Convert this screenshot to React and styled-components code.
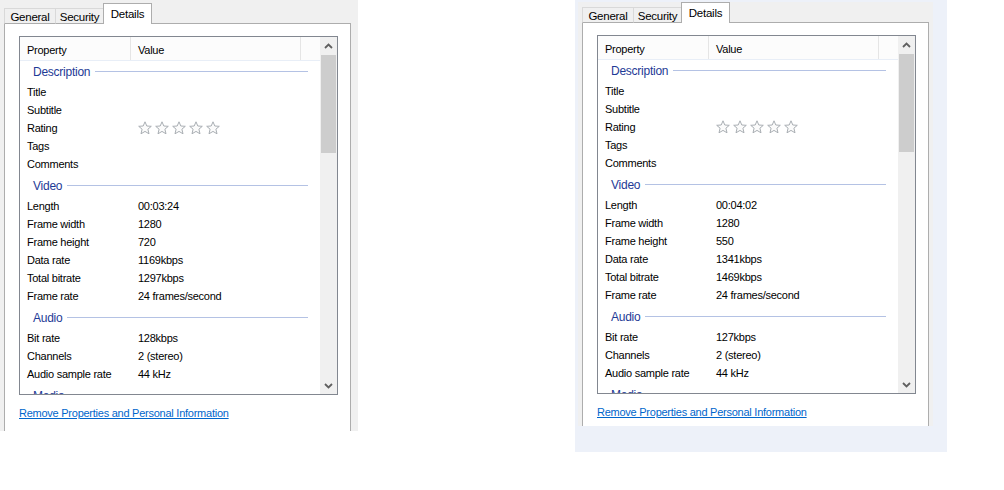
import styled, { createGlobalStyle } from "styled-components";

const GlobalStyle = createGlobalStyle`
  html, body { margin: 0; padding: 0; background: #ffffff; }
  body {
    font-family: "Liberation Sans", Arial, sans-serif;
    font-size: 11px;
    letter-spacing: -0.25px;
    color: #000;
  }
`;

const Stage = styled.div`
  display: flex;
  align-items: flex-start;
  width: 1004px;
  height: 490px;
  overflow: hidden;
`;

const Frame = styled.div`
  margin-left: ${(p) => p.$offset}px;
  width: ${(p) => p.$width}px;
  height: ${(p) => p.$height}px;
  padding: ${(p) => p.$pad};
  background: ${(p) => p.$bg};
  box-sizing: border-box;
`;

const Window = styled.div`
  width: ${(p) => p.$width}px;
  height: ${(p) => p.$height}px;
  padding: ${(p) => p.$top}px 0 0 4px;
  background: #f0f0f0;
  box-sizing: border-box;
  display: flex;
  flex-direction: column;
  overflow: hidden;
`;

const TabStrip = styled.div`
  display: flex;
  align-items: flex-end;
  height: 20px;
  margin-bottom: -1px;
  position: relative;
  z-index: 1;
`;

const Tab = styled.div`
  width: ${(p) => p.$w}px;
  height: ${(p) => (p.$active ? 21 : 16)}px;
  box-sizing: border-box;
  border: 1px solid ${(p) => (p.$active ? "#adadad" : "#d9d9d9")};
  border-bottom: ${(p) => (p.$active ? "none" : "1px solid #adadad")};
  background: ${(p) => (p.$active ? "#ffffff" : "#f0f0f0")};
  display: flex;
  justify-content: center;
  align-items: ${(p) => (p.$active ? "flex-start" : "center")};
  padding-top: ${(p) => (p.$active ? 4 : 1)}px;
  margin-left: ${(p) => (p.$first ? 0 : -1)}px;
  font-size: 11.5px;
`;

const Panel = styled.div`
  width: 347px;
  flex: 1;
  background: #ffffff;
  border: 1px solid #adadad;
  border-bottom: none;
  box-sizing: border-box;
  padding: 12px 0 0 14px;
  display: flex;
  flex-direction: column;
`;

const ListBox = styled.div`
  width: 319px;
  height: 359px;
  border: 1px solid #828790;
  box-sizing: border-box;
  display: flex;
`;

const ListContent = styled.div`
  width: 300px;
  overflow: hidden;
  display: flex;
  flex-direction: column;
`;

const HeaderRow = styled.div`
  height: 24px;
  flex-shrink: 0;
  display: flex;
  background: #fcfcfc;
  border-bottom: 1px solid #e8eef7;
  box-sizing: border-box;
`;

const HeaderCell = styled.div`
  width: ${(p) => p.$w}px;
  flex-shrink: 0;
  border-right: 1px solid #e5e5e5;
  box-sizing: border-box;
  padding: 2px 0 0 7px;
  display: flex;
  align-items: center;
`;

const GroupHeader = styled.div`
  height: 21px;
  flex-shrink: 0;
  margin-top: ${(p) => (p.$first ? 0 : 3)}px;
  padding: 1px 12px 0 13px;
  box-sizing: border-box;
  display: flex;
  align-items: center;
  color: #1e3a96;
  font-size: 12px;
`;

const GroupLine = styled.div`
  flex: 1;
  height: 1px;
  margin: 0 0 1px 5px;
  background: #b4c2e4;
`;

const Row = styled.div`
  height: 18px;
  flex-shrink: 0;
  padding-top: 2px;
  box-sizing: border-box;
  display: flex;
  align-items: center;
`;

const Label = styled.div`
  width: 111px;
  flex-shrink: 0;
  padding-left: 7px;
  box-sizing: border-box;
`;

const Value = styled.div`
  padding-left: 7px;
  display: flex;
  align-items: center;
  gap: 3px;
`;

const ScrollBar = styled.div`
  width: 17px;
  background: #f0f0f0;
  display: flex;
  flex-direction: column;
`;

const ArrowButton = styled.div`
  height: 17px;
  flex-shrink: 0;
  display: flex;
  align-items: center;
  justify-content: center;
`;

const Thumb = styled.div`
  height: 98px;
  margin: 1px 1px 0;
  background: #cdcdcd;
  flex-shrink: 0;
`;

const Track = styled.div`
  flex: 1;
`;

const RemoveLink = styled.a`
  margin-top: 11px;
  line-height: 14px;
  align-self: flex-start;
  color: #0066cc;
  text-decoration: underline;
  cursor: pointer;
`;

const Chevron = ({ down }) => (
  <svg width="9" height="6" viewBox="0 0 9 6">
    <polyline
      points={down ? "1,1 4.5,4.5 8,1" : "1,5 4.5,1.5 8,5"}
      fill="none"
      stroke="#606060"
      strokeWidth="1.8"
    />
  </svg>
);

const Star = () => (
  <svg width="14" height="14" viewBox="0 0 14 14">
    <polygon
      points="7,0.8 8.8,5 13.3,5.3 9.9,8.2 11,12.8 7,10.4 3,12.8 4.1,8.2 0.7,5.3 5.2,5"
      fill="#fbfbfb"
      stroke="#a9aeb3"
      strokeWidth="1"
      strokeLinejoin="round"
    />
  </svg>
);

const Rating = () => (
  <>
    {[0, 1, 2, 3, 4].map((i) => (
      <Star key={i} />
    ))}
  </>
);

const makeGroups = (v) => [
  {
    title: "Description",
    rows: [["Title"], ["Subtitle"], ["Rating", <Rating key="r" />], ["Tags"], ["Comments"]],
  },
  {
    title: "Video",
    rows: [
      ["Length", v.length],
      ["Frame width", "1280"],
      ["Frame height", v.height],
      ["Data rate", v.dataRate],
      ["Total bitrate", v.total],
      ["Frame rate", "24 frames/second"],
    ],
  },
  {
    title: "Audio",
    rows: [
      ["Bit rate", v.bitRate],
      ["Channels", "2 (stereo)"],
      ["Audio sample rate", "44 kHz"],
    ],
  },
  { title: "Media", rows: [] },
];

const tabs = [
  { name: "General", w: 52 },
  { name: "Security", w: 49 },
  { name: "Details", w: 49, active: true },
];

const PropertiesDialog = ({ values, width, height, top }) => (
  <Window $width={width} $height={height} $top={top}>
    <TabStrip>
      {tabs.map((t, i) => (
        <Tab key={t.name} $w={t.w} $active={t.active} $first={i === 0}>
          {t.name}
        </Tab>
      ))}
    </TabStrip>
    <Panel>
      <ListBox>
        <ListContent>
          <HeaderRow>
            <HeaderCell $w={111}>Property</HeaderCell>
            <HeaderCell $w={170}>Value</HeaderCell>
          </HeaderRow>
          {makeGroups(values).map((g, gi) => (
            <div key={g.title}>
              <GroupHeader $first={gi === 0}>
                {g.title}
                <GroupLine />
              </GroupHeader>
              {g.rows.map(([label, value]) => (
                <Row key={label}>
                  <Label>{label}</Label>
                  <Value>{value}</Value>
                </Row>
              ))}
            </div>
          ))}
        </ListContent>
        <ScrollBar>
          <ArrowButton>
            <Chevron />
          </ArrowButton>
          <Thumb />
          <Track />
          <ArrowButton>
            <Chevron down />
          </ArrowButton>
        </ScrollBar>
      </ListBox>
      <RemoveLink>Remove Properties and Personal Information</RemoveLink>
    </Panel>
  </Window>
);

const first = {
  length: "00:03:24",
  height: "720",
  dataRate: "1169kbps",
  total: "1297kbps",
  bitRate: "128kbps",
};

const second = {
  length: "00:04:02",
  height: "550",
  dataRate: "1341kbps",
  total: "1469kbps",
  bitRate: "127kbps",
};

export default function App() {
  return (
    <>
      <GlobalStyle />
      <Stage>
        <PropertiesDialog values={first} width={358} height={431} top={4} />
        <Frame $offset={217} $width={372} $height={452} $pad="2px 0 0 3px" $bg="#edf1f9">
          <PropertiesDialog values={second} width={355} height={424} top={1} />
        </Frame>
      </Stage>
    </>
  );
}
